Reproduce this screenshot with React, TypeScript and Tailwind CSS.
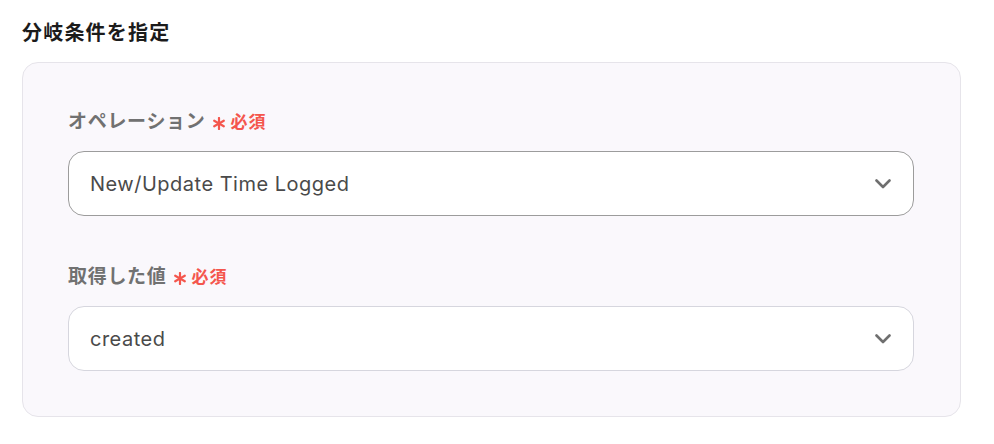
import React from 'react';

const JP = "font-['Inter','Noto_Sans_CJK_JP',sans-serif]";

const Chevron = () => (
  <svg width="16" height="10" viewBox="0 0 16 10" fill="none" className="shrink-0">
    <path d="M1.5 1.5 L8 8 L14.5 1.5" stroke="#6f6f6f" strokeWidth="2.6" strokeLinecap="round" strokeLinejoin="round" />
  </svg>
);

const Asterisk = () => (
  <svg width="12" height="13" viewBox="0 0 12 13" className="shrink-0">
    <g stroke="#f4564d" strokeWidth="2.2" strokeLinecap="round">
      <line x1="6" y1="1" x2="6" y2="12" />
      <line x1="1.2" y1="3.75" x2="10.8" y2="9.25" />
      <line x1="1.2" y1="9.25" x2="10.8" y2="3.75" />
    </g>
  </svg>
);

const Field: React.FC<{ label: string; value: string; active?: boolean }> = ({ label, value, active }) => (
  <div className="flex flex-col">
    <div className="flex items-center h-[26px]">
      <span className="text-[19px] leading-[26px] font-bold tracking-[0.7px] text-[#717171]">{label}</span>
      <span className="ml-[7px] mt-[2px]"><Asterisk /></span>
      <span className="ml-[6px] text-[17px] leading-[26px] font-bold tracking-[1px] text-[#f4564d]">必須</span>
    </div>
    <div
      className={`mt-4 h-[65px] rounded-2xl bg-white border flex items-center justify-between pl-[21px] pr-[22px] ${
        active ? 'border-[#9c9c9c]' : 'border-[#d6d6de]'
      }`}
    >
      <span className="text-[20px] tracking-[0.5px] text-[#4a4a4a]">{value}</span>
      <Chevron />
    </div>
  </div>
);

export default function App() {
  return (
    <div className={`${JP} bg-white w-[994px] h-[444px] pl-[22px] pt-[19px]`}>
      <h2 className="text-[20px] leading-[28px] font-semibold tracking-[0.06em] text-[#1b1b1b]">分岐条件を指定</h2>
      <div className="mt-[15px] w-[939px] rounded-2xl border border-[#e6e4ea] bg-[#faf8fc] pt-[46px] pb-[45px] pl-[45px] pr-[46px] flex flex-col gap-[48px]">
        <Field label="オペレーション" value="New/Update Time Logged" active />
        <Field label="取得した値" value="created" />
      </div>
    </div>
  );
}
